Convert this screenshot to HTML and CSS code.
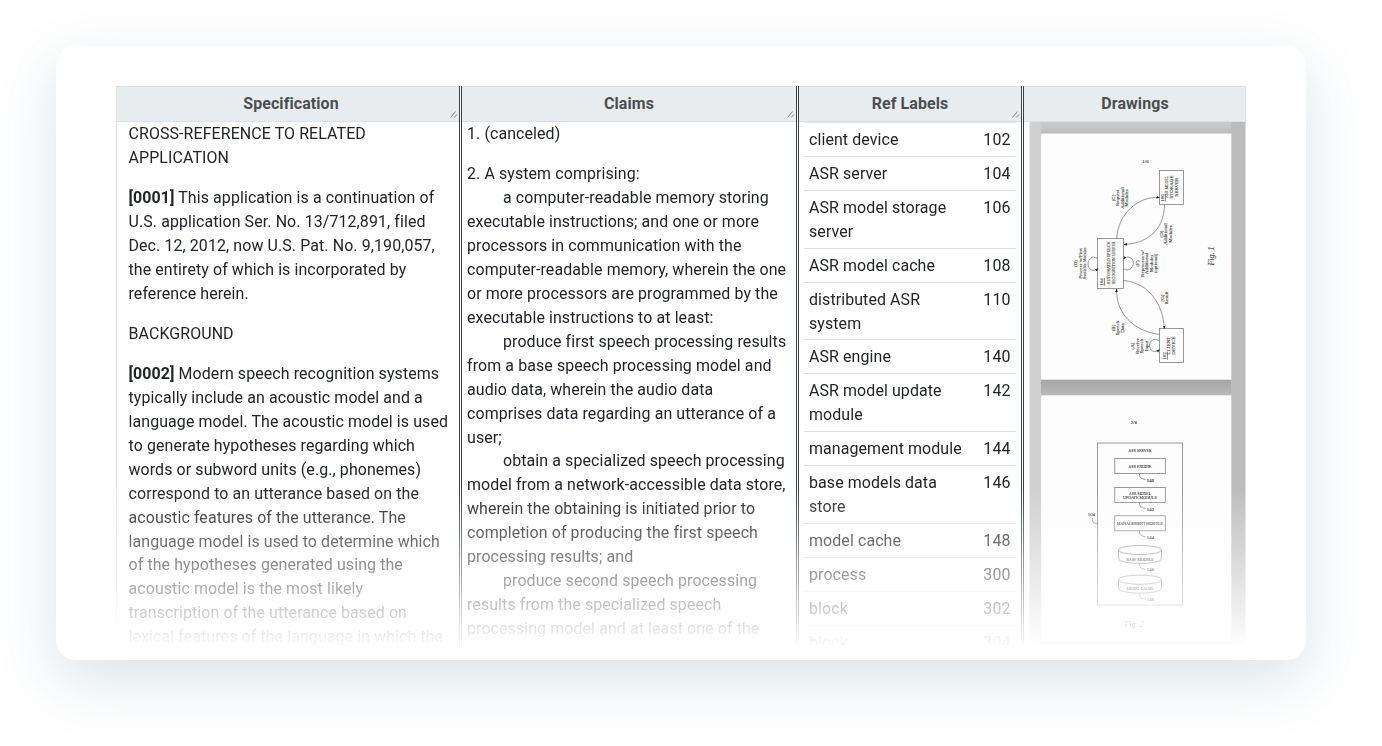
FILE: index.html
```html
<!DOCTYPE html>
<html lang="en">
<head>
<meta charset="utf-8">
<title>Patent application</title>
<link rel="stylesheet" href="styles.css">
</head>
<body>
<main class="card">
<div class="viewer">
  <section class="col col-spec">
    <h2 class="head">Specification<svg class="grip" viewBox="0 0 9 9"><path d="M1.500 7.500L6.500 1.500M5.300 7.500L8 4.500"/></svg></h2>
    <div class="text spec">
      <p>CROSS-REFERENCE TO RELATED<br>APPLICATION</p>
      <p><b>[0001]</b> This application is a continuation of<br>U.S. application Ser. No. 13/712,891, filed<br>Dec. 12, 2012, now U.S. Pat. No. 9,190,057,<br>the entirety of which is incorporated by<br>reference herein.</p>
      <p>BACKGROUND</p>
      <p><b>[0002]</b> Modern speech recognition systems<br>typically include an acoustic model and a<br>language model. The acoustic model is used<br>to generate hypotheses regarding which<br>words or subword units (e.g., phonemes)<br>correspond to an utterance based on the<br>acoustic features of the utterance. The<br>language model is used to determine which<br>of the hypotheses generated using the<br>acoustic model is the most likely<br>transcription of the utterance based on<br>lexical features of the language in which the</p>
    </div>
  </section>
  <section class="col col-claims">
    <h2 class="head">Claims<svg class="grip" viewBox="0 0 9 9"><path d="M1.500 7.500L6.500 1.500M5.300 7.500L8 4.500"/></svg></h2>
    <div class="text claims">
      <p>1. (canceled)</p>
      <p>2. A system comprising:</p>
      <p class="step">a computer-readable memory storing<br>executable instructions; and one or more<br>processors in communication with the<br>computer-readable memory, wherein the one<br>or more processors are programmed by the<br>executable instructions to at least:</p>
      <p class="step">produce first speech processing results<br>from a base speech processing model and<br>audio data, wherein the audio data<br>comprises data regarding an utterance of a<br>user;</p>
      <p class="step">obtain a specialized speech processing<br>model from a network-accessible data store,<br>wherein the obtaining is initiated prior to<br>completion of producing the first speech<br>processing results; and</p>
      <p class="step">produce second speech processing<br>results from the specialized speech<br>processing model and at least one of the<br>audio data or the first speech processing</p>
    </div>
  </section>
  <section class="col col-refs">
    <h2 class="head">Ref Labels<svg class="grip" viewBox="0 0 9 9"><path d="M1.500 7.500L6.500 1.500M5.300 7.500L8 4.500"/></svg></h2>
    <ul class="refs">
      <li><span>client device</span><span>102</span></li>
      <li><span>ASR server</span><span>104</span></li>
      <li><span>ASR model storage<br>server</span><span>106</span></li>
      <li><span>ASR model cache</span><span>108</span></li>
      <li><span>distributed ASR<br>system</span><span>110</span></li>
      <li><span>ASR engine</span><span>140</span></li>
      <li><span>ASR model update<br>module</span><span>142</span></li>
      <li><span>management module</span><span>144</span></li>
      <li><span>base models data<br>store</span><span>146</span></li>
      <li><span>model cache</span><span>148</span></li>
      <li><span>process</span><span>300</span></li>
      <li><span>block</span><span>302</span></li>
      <li><span>block</span><span>304</span></li>
    </ul>
  </section>
  <section class="col col-draw">
    <h2 class="head">Drawings</h2>
    <svg class="sheets" viewBox="1029 122 217 524">
      <defs>
        <linearGradient id="gap" x1="0" y1="0" x2="0" y2="1"><stop offset="0" stop-color="#a3a5a5"/><stop offset="1" stop-color="#b9bbba"/></linearGradient>
        <linearGradient id="lead" x1="0" y1="0" x2="0" y2="1"><stop offset="0" stop-color="#cacaca"/><stop offset=".5" stop-color="#c5c6c5"/><stop offset="1" stop-color="#b7b8b7"/></linearGradient>
        <marker id="arrow" viewBox="0 0 4 4" refX="3.500" refY="2" markerWidth="3.400" markerHeight="3.400" orient="auto" markerUnits="userSpaceOnUse"><path class="tip" d="M0 .4L4 2L0 3.600Z"/></marker>
      </defs>
      <rect x="1029.500" y="122" width="12" height="524" fill="#cfcfcf"/>
      <rect x="1041" y="122" width="191" height="12" fill="url(#lead)"/>
      <rect x="1041" y="379" width="191" height="17" fill="url(#gap)"/>
      <rect x="1041" y="641" width="191" height="5" fill="url(#gap)"/>
      <rect x="1231" y="122" width="14.500" height="524" fill="#bcbcbc"/>
      <rect x="1041.300" y="133.500" width="190" height="246.200" fill="#fdfdfd"/>
      <rect x="1041.300" y="395.300" width="190" height="246" fill="#fdfdfd"/>

      <g class="line">
        <rect x="1159.500" y="170.500" width="24" height="34"/>
        <rect x="1097.500" y="238.500" width="26" height="50"/>
        <rect x="1159.500" y="328.500" width="24" height="34"/>
        <path marker-end="url(#arrow)" d="M1116.700 238.500C1118 214 1138 196 1159.500 197.500"/>
        <path marker-end="url(#arrow)" d="M1164.500 204.500C1164.500 227 1150 243.500 1124 244.500"/>
        <path marker-end="url(#arrow)" d="M1123.500 280.500C1149 283 1163 304 1164.300 328.500"/>
        <path marker-end="url(#arrow)" d="M1159.500 334.500C1133 331 1116 313 1116.500 289"/>
        <path marker-end="url(#arrow)" d="M1097.500 258.500C1092 255 1088 259 1088 264C1088 270 1094 272.500 1098 268.500"/>
        <path marker-end="url(#arrow)" d="M1123.500 268.500C1128 272.500 1133.300 268 1133.300 263C1133.300 257 1127 255.500 1123.500 259"/>
        <path marker-end="url(#arrow)" d="M1159.500 341C1155 337.500 1149.500 340 1149.500 345.500C1149.500 351 1155 353.500 1159.500 349.500"/>
      </g>
      <g class="ink">
        <text x="1145.500" y="162.500">1/6</text>
        <text transform="translate(1168 187) rotate(-90)" textLength="22" lengthAdjust="spacingAndGlyphs">ASR MODEL</text>
        <text transform="translate(1173 187) rotate(-90)">STORAGE</text>
        <text transform="translate(1178 187) rotate(-90)">SERVER</text>
        <text class="u" transform="translate(1164 198) rotate(-90)">106</text>
        <text transform="translate(1110 263) rotate(-90)" textLength="43" lengthAdjust="spacingAndGlyphs">AUTOMATED SPEECH</text>
        <text transform="translate(1115 263) rotate(-90)" textLength="43" lengthAdjust="spacingAndGlyphs">RECOGNITION SERVER</text>
        <text class="u" transform="translate(1103 282) rotate(-90)">104</text>
        <text transform="translate(1170 345.500) rotate(-90)">CLIENT</text>
        <text transform="translate(1175 345.500) rotate(-90)">DEVICE</text>
        <text class="u" transform="translate(1166 356) rotate(-90)">102</text>
        <text transform="translate(1114.500 198) rotate(-90)">(C)</text>
        <text transform="translate(1119 198) rotate(-90)">Request</text>
        <text transform="translate(1123.500 198) rotate(-90)">Additional</text>
        <text transform="translate(1128 198) rotate(-90)">Modules</text>
        <text transform="translate(1162.500 234) rotate(-90)">(D)</text>
        <text transform="translate(1167 234) rotate(-90)">Additional</text>
        <text transform="translate(1171.500 234) rotate(-90)">Modules</text>
        <text transform="translate(1077 263.500) rotate(-90)">(D)</text>
        <text transform="translate(1081.500 263.500) rotate(-90)">Process w/First</text>
        <text transform="translate(1086 263.500) rotate(-90)" textLength="32" lengthAdjust="spacingAndGlyphs">Available Modules</text>
        <text transform="translate(1138.500 263.500) rotate(-90)">(F)</text>
        <text transform="translate(1143.500 263.500) rotate(-90)">Reprocess w/</text>
        <text transform="translate(1148 263.500) rotate(-90)">Additional</text>
        <text transform="translate(1152.500 263.500) rotate(-90)">Modules</text>
        <text transform="translate(1157 263.500) rotate(-90)">(optional)</text>
        <text transform="translate(1163.500 298) rotate(-90)">(G)</text>
        <text transform="translate(1168 298) rotate(-90)">Result</text>
        <text transform="translate(1114.500 328) rotate(-90)">(B)</text>
        <text transform="translate(1119 328) rotate(-90)">Speech</text>
        <text transform="translate(1123.500 328) rotate(-90)">Data</text>
        <text transform="translate(1134 346) rotate(-90)">(A)</text>
        <text transform="translate(1138.500 346) rotate(-90)">Receive</text>
        <text transform="translate(1143 346) rotate(-90)">Speech</text>
        <text transform="translate(1147.500 346) rotate(-90)">Input</text>
        <text class="fig" transform="translate(1214 256) rotate(-90)">Fig. 1</text>
      </g>

      <g class="line">
        <rect x="1097.500" y="443" width="85" height="162"/>
        <rect x="1114.800" y="458.500" width="50.500" height="15"/>
        <rect x="1114.800" y="487.500" width="50.500" height="15"/>
        <rect x="1114.800" y="515.800" width="50.500" height="15"/>
        <path d="M1139.500 473.500c0 5 2 5 6 6M1139.500 502.500c0 5 2 5 6 6M1139.500 530.800c0 5 2 5 6 6M1139.500 563.500c0 5 2 5 6 6M1139.500 593.300c0 5 2 5 6 6M1092.300 518c0 4 1 5 5.500 6"/>
        <g id="store"><ellipse cx="1140" cy="550" rx="21.500" ry="4.600"/><path d="M1118.500 550v8.500c0 6.500 43 6.500 43 0v-8.500"/></g>
        <use href="#store" y="29.700"/>
      </g>
      <g class="ink">
        <text x="1134" y="424">2/6</text>
        <text x="1140" y="452" textLength="23" lengthAdjust="spacingAndGlyphs">ASR SERVER</text>
        <text x="1140" y="467.500" textLength="23" lengthAdjust="spacingAndGlyphs">ASR ENGINE</text>
        <text x="1140" y="494.500" textLength="22" lengthAdjust="spacingAndGlyphs">ASR MODEL</text>
        <text x="1140" y="499.300" textLength="34" lengthAdjust="spacingAndGlyphs">UPDATE MODULE</text>
        <text x="1140" y="525" textLength="46" lengthAdjust="spacingAndGlyphs">MANAGEMENT MODULE</text>
        <text x="1140" y="560.500" textLength="27" lengthAdjust="spacingAndGlyphs">BASE MODELS</text>
        <text x="1140" y="590.300" textLength="27" lengthAdjust="spacingAndGlyphs">MODEL CACHE</text>
        <text x="1150.500" y="481.500">140</text>
        <text x="1150.500" y="510.500">142</text>
        <text x="1150.500" y="538.800">144</text>
        <text x="1150.500" y="571">146</text>
        <text x="1150.500" y="600.800">148</text>
        <text x="1091.500" y="516">104</text>
        <text class="fig" x="1134" y="627">Fig. 2</text>
      </g>
    </svg>
  </section>
</div>
</main>
</body>
</html>
```
FILE: styles.css
```css
* { box-sizing: border-box; }
body {
  margin: 0;
  width: 1382px;
  height: 746px;
  padding: 46px 0 0 56px;
  overflow: hidden;
  background: #fff;
  color: #212529;
  font: 15.94px/23.92px Roboto, "Liberation Sans", sans-serif;
  letter-spacing: .1px;
}
.card {
  width: 1250px;
  height: 614px;
  padding: 40px 60px 15px;
  border-radius: 20px;
  background: #fff;
  box-shadow: 0 20px 60px rgba(38, 92, 120, .17);
}
.viewer {
  display: grid;
  grid-template-columns: 346px 337px 225px 222px;
  width: 1130px;
  height: 559px;
  overflow: hidden;
  -webkit-mask-image: linear-gradient(#000 0, #000 400px, transparent 564px);
  mask-image: linear-gradient(#000 0, #000 400px, transparent 564px);
}
.col {
  height: 559px;
  overflow: hidden;
  border-right: 3px double #3c4045;
}
.col-spec { border-left: 1px solid #dee2e6; }
.col-draw { border-right: 0; }
.head {
  position: relative;
  height: 36px;
  margin: 0;
  border: 1px solid #dbe0e5;
  border-width: 1px 0;
  background: #e9ecef;
  color: #4a4e52;
  font-size: 15.94px;
  font-weight: 700;
  line-height: 34px;
  text-align: center;
}
.col-spec .head { padding-left: 6px; }
.col-draw .head {
  padding-left: 1px;
  border-right-width: 1px;
}
.grip {
  position: absolute;
  right: 1px;
  bottom: 2px;
  width: 9px;
  height: 9px;
  fill: none;
  stroke: #777;
  stroke-width: .9;
}
.text {
  padding-top: .4px;
  white-space: nowrap;
}
.text p { margin: 0 0 16.1px; }
.spec { padding-left: 11.5px; }
.claims { padding-left: 5px; }
.claims .step { margin: 0; text-indent: 36px; }
.claims p:nth-child(2) { margin: 0; }
.refs {
  margin: 0;
  padding: 0 5px 0 5px;
  list-style: none;
}
.refs li {
  display: flex;
  justify-content: space-between;
  padding: 5px 5.500px 4px 5px;
  border-top: 1px solid #dee2e6;
  white-space: nowrap;
}
.sheets {
  display: block;
  width: 217px;
  height: 524px;
  margin-left: 5px;
}
.line {
  fill: none;
  stroke: #777;
  stroke-width: .75;
}
.tip { fill: #222; stroke: none; }
.ink {
  fill: #444;
  stroke: #444;
  stroke-width: .12;
  font: 5px "Liberation Serif", serif;
  letter-spacing: 0;
  text-anchor: middle;
}
.ink .u { text-decoration: underline; }
.ink .fig { font-size: 8px; font-style: italic; }
```
